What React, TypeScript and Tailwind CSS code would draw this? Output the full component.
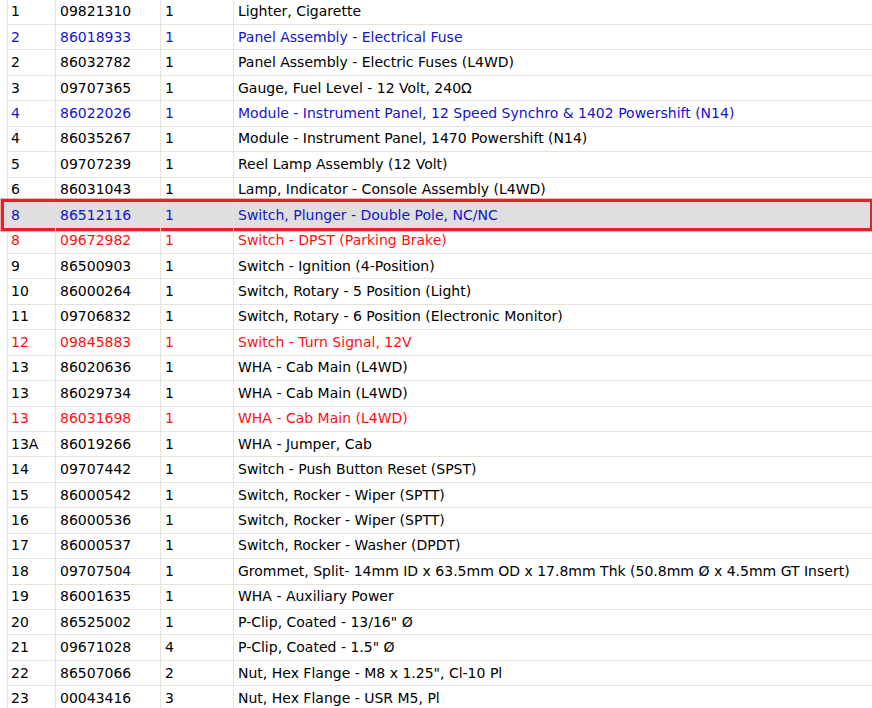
import React from "react";

type Row = { n: string; pn: string; q: string; d: string; c?: "blue" | "red"; hl?: boolean };

const rows: Row[] = [
  { n: "1", pn: "09821310", q: "1", d: "Lighter, Cigarette" },
  { n: "2", pn: "86018933", q: "1", d: "Panel Assembly - Electrical Fuse", c: "blue" },
  { n: "2", pn: "86032782", q: "1", d: "Panel Assembly - Electric Fuses (L4WD)" },
  { n: "3", pn: "09707365", q: "1", d: "Gauge, Fuel Level - 12 Volt, 240Ω" },
  { n: "4", pn: "86022026", q: "1", d: "Module - Instrument Panel, 12 Speed Synchro & 1402 Powershift (N14)", c: "blue" },
  { n: "4", pn: "86035267", q: "1", d: "Module - Instrument Panel, 1470 Powershift (N14)" },
  { n: "5", pn: "09707239", q: "1", d: "Reel Lamp Assembly (12 Volt)" },
  { n: "6", pn: "86031043", q: "1", d: "Lamp, Indicator - Console Assembly (L4WD)" },
  { n: "8", pn: "86512116", q: "1", d: "Switch, Plunger - Double Pole, NC/NC", c: "blue", hl: true },
  { n: "8", pn: "09672982", q: "1", d: "Switch - DPST (Parking Brake)", c: "red" },
  { n: "9", pn: "86500903", q: "1", d: "Switch - Ignition (4-Position)" },
  { n: "10", pn: "86000264", q: "1", d: "Switch, Rotary - 5 Position (Light)" },
  { n: "11", pn: "09706832", q: "1", d: "Switch, Rotary - 6 Position (Electronic Monitor)" },
  { n: "12", pn: "09845883", q: "1", d: "Switch - Turn Signal, 12V", c: "red" },
  { n: "13", pn: "86020636", q: "1", d: "WHA - Cab Main (L4WD)" },
  { n: "13", pn: "86029734", q: "1", d: "WHA - Cab Main (L4WD)" },
  { n: "13", pn: "86031698", q: "1", d: "WHA - Cab Main (L4WD)", c: "red" },
  { n: "13A", pn: "86019266", q: "1", d: "WHA - Jumper, Cab" },
  { n: "14", pn: "09707442", q: "1", d: "Switch - Push Button Reset (SPST)" },
  { n: "15", pn: "86000542", q: "1", d: "Switch, Rocker - Wiper (SPTT)" },
  { n: "16", pn: "86000536", q: "1", d: "Switch, Rocker - Wiper (SPTT)" },
  { n: "17", pn: "86000537", q: "1", d: "Switch, Rocker - Washer (DPDT)" },
  { n: "18", pn: "09707504", q: "1", d: "Grommet, Split- 14mm ID x 63.5mm OD x 17.8mm Thk (50.8mm Ø x 4.5mm GT Insert)" },
  { n: "19", pn: "86001635", q: "1", d: "WHA - Auxiliary Power" },
  { n: "20", pn: "86525002", q: "1", d: "P-Clip, Coated - 13/16\" Ø" },
  { n: "21", pn: "09671028", q: "4", d: "P-Clip, Coated - 1.5\" Ø" },
  { n: "22", pn: "86507066", q: "2", d: "Nut, Hex Flange - M8 x 1.25\", Cl-10 Pl" },
  { n: "23", pn: "00043416", q: "3", d: "Nut, Hex Flange - USR M5, Pl" },
];

export default function App() {
  return (
    <div className="w-[872px] h-[708px] overflow-hidden bg-white">
      <div
        className="-mt-[0.5px] ml-[7px] w-[900px] border-l border-[#e7e3d7] text-[14px] text-black"
        style={{ fontFamily: '"DejaVu Sans", Verdana, sans-serif' }}
      >
        {rows.map((r, i) => {
          const color = r.c === "blue" ? "text-[#1414cc]" : r.c === "red" ? "text-[#ff1010]" : "text-black";
          return (
            <div key={i} className={`relative flex h-[25.44px] border-b border-[#e7e3d7] ${color}`}>
              {r.hl && (
                <div className="absolute -left-[7px] top-[-4.5px] h-[32.5px] w-[872px] border-[3px] border-[#e3222a] bg-[#dfdfdf] shadow-[0_0_0_1px_rgba(227,34,42,0.35)]" />
              )}
              <div className="relative flex w-[47px] items-center pl-[3px]">{r.n}</div>
              <div className="relative flex w-[105px] items-center border-l border-[#e7e3d7] pl-[4px]">{r.pn}</div>
              <div className="relative flex w-[73px] items-center border-l border-[#e7e3d7] pl-[4px]">{r.q}</div>
              <div className="relative flex flex-1 items-center whitespace-nowrap border-l border-[#e7e3d7] pl-[4px]">{r.d}</div>
            </div>
          );
        })}
      </div>
    </div>
  );
}
